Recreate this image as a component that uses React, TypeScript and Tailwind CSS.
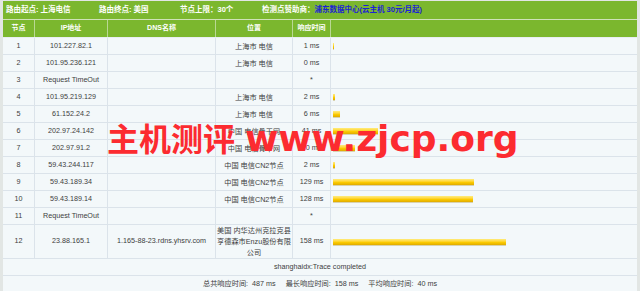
const rows = [
  { n: "1", ip: "101.227.82.1", dns: "", loc: ["上海市 电信"], ms: 1 },
  { n: "2", ip: "101.95.236.121", dns: "", loc: ["上海市 电信"], ms: 0 },
  { n: "3", ip: "Request TimeOut", dns: "", loc: [], ms: -1 },
  { n: "4", ip: "101.95.219.129", dns: "", loc: ["上海市 电信"], ms: 2 },
  { n: "5", ip: "61.152.24.2", dns: "", loc: ["上海市 电信"], ms: 6 },
  { n: "6", ip: "202.97.24.142", dns: "", loc: ["中国 电信骨干网"], ms: 41 },
  { n: "7", ip: "202.97.91.2", dns: "", loc: ["中国 电信骨干网"], ms: 20 },
  { n: "8", ip: "59.43.244.117", dns: "", loc: ["中国 电信CN2节点"], ms: 2 },
  { n: "9", ip: "59.43.189.34", dns: "", loc: ["中国 电信CN2节点"], ms: 129 },
  { n: "10", ip: "59.43.189.14", dns: "", loc: ["中国 电信CN2节点"], ms: 128 },
  { n: "11", ip: "Request TimeOut", dns: "", loc: [], ms: -1 },
  {
    n: "12",
    ip: "23.88.165.1",
    dns: "1.165-88-23.rdns.yhsrv.com",
    loc: ["美国 内华达州克拉克县", "亨德森市Enzu股份有限", "公司"],
    ms: 158,
  },
];

const font = "font-['Liberation_Sans','Noto_Sans_CJK_SC',sans-serif]";

export default function App() {
  return (
    <div className={`relative w-[640px] h-[291px] overflow-hidden bg-[#e2e6e4] pl-[3px] pr-[3px] pt-[1px] ${font}`}>
      {/* top bar */}
      <div className="flex items-center h-[18px] bg-[#7bb72e] text-white font-bold text-[7.5px] pl-[3px]">
        <span className="w-[93px]">路由起点: 上海电信</span>
        <span className="w-[81px]">路由终点: 美国</span>
        <span className="w-[82px]">节点上限：30个</span>
        <span>检测点赞助商：</span>
        <span className="text-[#1b22d6]">浦东数据中心(云主机 30元/月起)</span>
      </div>
      <div className="h-[1px] bg-[#cfe2b8]" />

      {/* column heads */}
      <div className="grid grid-cols-[32px_73px_108px_77px_38px_1fr] h-[18px] bg-[#7bb72e] text-white font-bold text-[7px] border-b border-[#e8eef2]">
        {["节点", "IP地址", "DNS名称", "位置", "响应时间", ""].map((h, i) => (
          <div key={i} className={`flex items-center justify-center ${i < 5 ? "border-r border-[#b9d894]" : ""}`}>
            {h}
          </div>
        ))}
      </div>

      <div className="bg-[#f3f8fa] text-[#3d3d3d] text-[7.2px]">
        {rows.map((r) => (
          <div
            key={r.n}
            className={`grid grid-cols-[32px_73px_108px_77px_38px_1fr] border-b border-[#dbe3ea] ${r.n === "12" ? "h-[34px]" : "h-[17px]"}`}
          >
            <div className="flex items-center justify-center border-r border-[#dbe3ea]">{r.n}</div>
            <div className="flex items-center justify-center border-r border-[#dbe3ea] whitespace-nowrap">{r.ip}</div>
            <div className="flex items-center justify-center border-r border-[#dbe3ea] whitespace-nowrap">{r.dns}</div>
            <div className="flex flex-col items-center justify-center border-r border-[#dbe3ea] whitespace-nowrap leading-[11px]">
              {r.loc.map((l) => (
                <span key={l}>{l}</span>
              ))}
            </div>
            <div className="flex items-center justify-center border-r border-[#dbe3ea] whitespace-nowrap">
              {r.ms < 0 ? "*" : `${r.ms} ms`}
            </div>
            <div className="flex items-center pl-[2px]">
              {r.ms > 0 && (
                <div
                  className="h-[6px] bg-linear-to-b from-[#ffec7a] via-[#ffd000] to-[#e0aa00] shadow-[0_1px_0_#d8d2b0]"
                  style={{ width: Math.max(1, Math.round(r.ms * 1.095)) }}
                />
              )}
            </div>
          </div>
        ))}
        <div className="flex items-center justify-center h-[17px] border-b border-[#dbe3ea]">
          shanghaidx:Trace completed
        </div>
        <div className="flex items-center justify-center gap-[10px] h-[17px]">
          <span>总共响应时间:&nbsp; 487 ms</span>
          <span>最长响应时间:&nbsp; 158 ms</span>
          <span>平均响应时间:&nbsp; 40 ms</span>
        </div>
      </div>

      {/* watermark */}
      <div className="absolute left-[107px] top-[121px] flex items-baseline text-[#fc2b30] font-bold leading-none pointer-events-none">
        <span className="text-[32px] font-['Noto_Sans_CJK_SC',sans-serif]">主机测评</span>
        <span className="ml-[10px] text-[36px] font-['DejaVu_Sans',sans-serif]">www.zjcp.org</span>
      </div>
    </div>
  );
}
